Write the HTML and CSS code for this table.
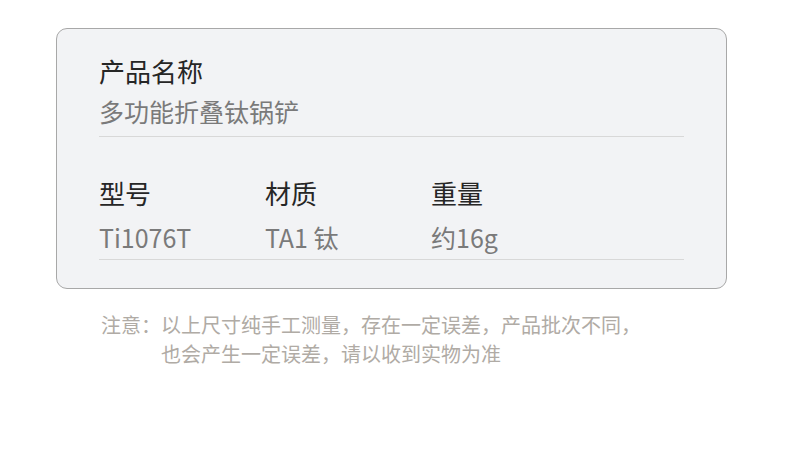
FILE: index.html
```html
<!DOCTYPE html>
<html lang="zh-CN">
<head>
  <meta charset="UTF-8">
  <meta name="viewport" content="width=device-width, initial-scale=1.0">
  <title>产品参数</title>
  <link rel="stylesheet" href="styles.css">
</head>
<body>
  <div class="page">
    <div class="card">
      <div class="item">
        <div class="label">产品名称</div>
        <div class="value">多功能折叠钛锅铲</div>
      </div>

      <div class="row">
        <div class="col">
          <div class="label">型号</div>
          <div class="value">Ti1076T</div>
        </div>
        <div class="col">
          <div class="label">材质</div>
          <div class="value">TA1 钛</div>
        </div>
        <div class="col">
          <div class="label">重量</div>
          <div class="value">约16g</div>
        </div>
      </div>
    </div>

    <div class="note">
      <span class="note-title">注意：</span>
      <span class="note-text">以上尺寸纯手工测量，存在一定误差，产品批次不同，<br>也会产生一定误差，请以收到实物为准</span>
    </div>
  </div>
</body>
</html>
```

FILE: styles.css
```css
body {
  margin: 0;
  background: #fff;
  font-family: "Noto Sans CJK SC", "Noto Sans", sans-serif;
}

.page {
  padding: 28px 0 0 56px;
}

.card {
  width: 585px;
  padding: 22px 42px 28px;
  background-color: #f2f3f5;
  border: 1px solid #a8a8a8;
  border-radius: 11px;
}

.item {
  padding-bottom: 5px;
  border-bottom: 1px solid #d8d8d8;
}

.item .label {
  font-size: 26px;
  line-height: 40px;
  color: #262626;
}

.item .value {
  font-size: 25px;
  line-height: 40px;
  color: #7a7a7a;
}

.row {
  display: flex;
  margin-top: 34px;
  border-bottom: 1px solid #d8d8d8;
}

.col {
  width: 166px;
}

.row .label {
  font-size: 26px;
  line-height: 44px;
  color: #262626;
}

.row .value {
  font-size: 25px;
  line-height: 44px;
  color: #7a7a7a;
}

.note {
  display: flex;
  margin: 21px 0 0 45px;
  font-size: 20px;
  line-height: 29px;
  color: #b0aba5;
}

.note-title {
  flex-shrink: 0;
}
```
